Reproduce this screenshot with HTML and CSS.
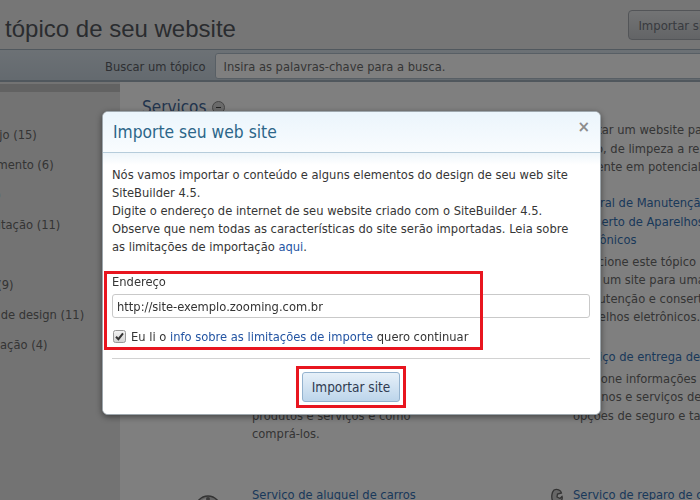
FILE: index.html
```html
<!DOCTYPE html>
<html lang="pt-BR">
<head>
  <meta charset="UTF-8">
  <meta name="viewport" content="width=device-width, initial-scale=1.0">
  <title>Importar site</title>
  <link rel="stylesheet" href="styles.css">
</head>
<body>
  <div class="page">
    <div class="top">
      <h1 class="page-title">Selecione um tópico de seu website</h1>
      <button class="btn-top">Importar site</button>
    </div>

    <div class="search">
      <label class="search-label" for="busca">Buscar um tópico</label>
      <input class="search-input" id="busca" placeholder="Insira as palavras-chave para a busca.">
    </div>

    <div class="layout">
      <div class="sidebar">
        <div class="sidebar-strip"></div>
        <ul class="categories">
          <li>Lojas, comércio e varejo (15)</li>
          <li>Arte, lazer e entretenimento (6)</li>
          <li class="active">Modas e estéticas (12)</li>
          <li>Construção civil e habitação (11)</li>
          <li>Esportes (8)</li>
          <li>Escolas e a educação (9)</li>
          <li>Gráfica, web, serviços de design (11)</li>
          <li>Marketings, a comunicação (4)</li>
        </ul>
      </div>

      <div class="main">
        <h2 class="section-title">Serviços <span class="toggle"></span></h2>

        <div class="topics">
          <div class="topic">
            <div class="topic-icon"></div>
            <div class="topic-body">
              <p class="topic-text">Um site para sua empresa de serviços<br>em qualquer área de atuação</p>
            </div>
          </div>
          <div class="topic">
            <div class="topic-icon"></div>
            <div class="topic-body">
              <p class="topic-text">Montar um website para seu negócio<br>ramo, de limpeza a reparos, e atrair<br>o cliente em potencial.</p>
            </div>
          </div>

          <div class="topic">
            <div class="topic-icon"></div>
            <div class="topic-body">
              <a class="topic-title" href="#">Serviços de limpeza<br>e conservação</a>
              <p class="topic-text">Selecione este tópico para criar<br>um site para empresas de<br>limpeza e conservação de<br>imóveis.</p>
            </div>
          </div>
          <div class="topic">
            <div class="topic-icon"></div>
            <div class="topic-body">
              <a class="topic-title" href="#">Central de Manutenção e<br>Conserto de Aparelhos<br>Eletrônicos</a>
              <p class="topic-text">Selecione este tópico para<br>criar um site para uma<br>manutenção e conserto de<br>aparelhos eletrônicos.</p>
            </div>
          </div>

          <div class="topic">
            <div class="topic-icon"></div>
            <div class="topic-body">
              <a class="topic-title" href="#">Loja de produtos e serviços</a>
              <p class="topic-text">Crie um site para divulgar<br>e apresentar aos clientes<br>produtos e serviços e como<br>comprá-los.</p>
            </div>
          </div>
          <div class="topic">
            <div class="topic-icon"></div>
            <div class="topic-body">
              <a class="topic-title" href="#">Serviço de entrega de encomendas</a>
              <p class="topic-text">Adicione informações sobre<br>e planos e serviços de entrega,<br>opções de seguro e taxas.</p>
            </div>
          </div>

          <div class="topic">
            <div class="topic-icon icon-car">
              <svg width="30" height="30" viewBox="0 0 30 30">
                <path d="M2 22c0-8 6-14 13-14s13 6 13 14z" fill="#c9c9c9" stroke="#666" stroke-width="1.5"/>
                <path d="M7 16c2-3 5-5 8-5" fill="none" stroke="#f2f2f2" stroke-width="2"/>
                <circle cx="15" cy="11" r="2" fill="#777"/>
              </svg>
            </div>
            <div class="topic-body">
              <a class="topic-title" href="#">Serviço de aluguel de carros</a>
            </div>
          </div>
          <div class="topic">
            <div class="topic-icon icon-wrench">
              <svg width="26" height="30" viewBox="0 0 26 30">
                <path d="M17 3c3-1.5 7 0 7.5 3l-4 1-.5 3 3 1.5 2-2c1 3-1.5 6.5-5 6L9 26c-1.5 1.5-4 0-3-2l9.5-10.5c-1.5-3.5-.5-8.5 1.5-10.5z" fill="#cfcfcf" stroke="#666" stroke-width="1.3"/>
              </svg>
            </div>
            <div class="topic-body">
              <a class="topic-title" href="#">Serviço de reparo de computadores</a>
            </div>
          </div>
        </div>
      </div>
    </div>
  </div>

  <div class="overlay"></div>

  <div class="modal">
    <div class="modal-head">
      <h3 class="modal-title">Importe seu web site</h3>
      <button class="modal-close">×</button>
    </div>
    <div class="modal-body">
      <p class="modal-text">Nós vamos importar o conteúdo e alguns elementos do design de seu web site SiteBuilder 4.5.<br>Digite o endereço de internet de seu website criado com o SiteBuilder 4.5.<br>Observe que nem todas as características do site serão importadas. Leia sobre as limitações de importação <a href="#">aqui</a>.</p>

      <div class="field">
        <label class="field-label" for="endereco">Endereço</label>
        <input class="field-input" id="endereco" value="http://site-exemplo.zooming.com.br">
        <label class="agree"><span class="check"><svg width="13" height="13" viewBox="0 0 13 13">
              <defs>
                <linearGradient id="box" x1="0" y1="0" x2="0" y2="1">
                  <stop offset="0" stop-color="#f4f4f4"/>
                  <stop offset="1" stop-color="#d2d2d2"/>
                </linearGradient>
              </defs>
              <rect x=".5" y=".5" width="12" height="12" rx="2" fill="url(#box)" stroke="#999"/>
              <path d="M3 6.8l2.4 2.4L10 3.4" fill="none" stroke="#333" stroke-width="2"/>
            </svg></span>Eu li o <a href="#">info sobre as limitações de importe</a> quero continuar</label>
        <span class="mark mark-field"></span>
      </div>

      <div class="modal-foot">
        <span class="mark-button"><button class="btn-import">Importar site</button></span>
      </div>
    </div>
  </div>
</body>
</html>
```

FILE: styles.css
```css
body {
    margin: 0;
    overflow: hidden;
    font-family: "DejaVu Sans Condensed", "DejaVu Sans", sans-serif;
    font-stretch: condensed;
    font-size: 12.8px;
    color: #6a6a6a;
    background: #fff;
}

a {
    color: #3572b5;
    text-decoration: none;
}

/* page behind the dialog, scrolled a bit to the right */
.page {
    width: 920px;
    margin-left: -150px;
}

.top {
    display: flex;
    justify-content: space-between;
    align-items: flex-start;
    height: 49px;
    padding: 0 46px 0 3px;
    background: #ededed;
}

.page-title {
    margin: 15px 0 0;
    font: normal 24px/28px "Liberation Sans", sans-serif;
    color: #55595f;
}

.btn-top {
    margin-top: 10px;
    height: 30px;
    padding: 0 9px;
    border: 1px solid #a6aab0;
    border-radius: 4px;
    background: linear-gradient(#e6e8ea, #c6c9cd);
    color: #70757e;
    font: inherit;
    font-size: 13px;
}

.search {
    display: flex;
    align-items: center;
    gap: 9px;
    padding: 3px 0 1px 255px;
    border-top: 1px solid #a2b0bc;
    border-bottom: 2px solid #a0aebb;
    background: linear-gradient(#d9e3eb, #c8d4de);
}

.search-label {
    color: #5c5f66;
}

.search-input {
    flex: 1;
    height: 26px;
    box-sizing: border-box;
    padding: 0 8px;
    border: 1px solid #b1bfcb;
    border-radius: 3px;
    font: inherit;
}

.search-input::placeholder {
    color: #6c6c6c;
}

.layout {
    display: flex;
    min-height: 420px;
}

.sidebar {
    width: 270px;
    flex-shrink: 0;
    background: #e6e6e6;
}

.sidebar-strip {
    height: 8px;
    margin-top: 2px;
    background-color: #eaeaea;
    background-image: radial-gradient(circle, #c4c4c4 0.7px, transparent 0.9px);
    background-size: 2px 2px;
}

.categories {
    list-style: none;
    margin: 28px 0 0;
    padding: 0 0 0 20px;
    line-height: 30px;
    white-space: nowrap;
}

.categories .active {
    color: #2f8f96;
}

.main {
    flex: 1;
    padding: 13px 0 0 22px;
}

.section-title {
    display: flex;
    align-items: center;
    gap: 6px;
    margin: 0;
    font-size: 17px;
    font-weight: normal;
    line-height: 24px;
    color: #45699a;
}

.toggle {
    position: relative;
    width: 11px;
    height: 11px;
    border: 1px solid #8a8a8a;
    border-radius: 50%;
    background: #d4d4d4;
}

.toggle::after {
    content: "";
    position: absolute;
    left: 3px;
    top: 5px;
    width: 5px;
    height: 1px;
    background: #444;
}

.topics {
    display: grid;
    grid-template-columns: 321px 400px;
    grid-template-rows: 73px 154px 138px auto;
    margin: 2px 0 0 48px;
    line-height: 18.5px;
    white-space: nowrap;
}

.topic {
    display: flex;
}

.topic-icon {
    width: 62px;
    flex-shrink: 0;
}

.icon-car {
    padding-top: 2px;
    box-sizing: border-box;
    padding-left: 3px;
}

.icon-wrench {
    padding-top: 1px;
    box-sizing: border-box;
    padding-left: 26px;
}

.topic-title {
    display: block;
    margin-bottom: 3px;
}

.topic-text {
    margin: 0;
}

/* dialog */
.overlay {
    position: fixed;
    inset: 0;
    background: rgba(0, 0, 0, 0.5);
}

.modal {
    position: fixed;
    left: 102px;
    top: 111px;
    width: 499px;
    box-sizing: border-box;
    border: 1px solid #9ea7ad;
    border-radius: 6px;
    background: #fff;
    box-shadow: 0 2px 6px rgba(0, 0, 0, 0.45);
    color: #363636;
    overflow: hidden;
}

.modal-head {
    display: flex;
    justify-content: space-between;
    align-items: center;
    height: 40px;
    padding: 0 10px;
    border-bottom: 1px solid #b6ccdb;
    background: linear-gradient(#ebf5fc, #f9fcfe);
}

.modal-title {
    margin: 0;
    font-size: 17.3px;
    font-weight: normal;
    color: #2c6689;
}

.modal-close {
    margin-top: -10px;
    padding: 0;
    border: 0;
    background: none;
    font: bold 15px "DejaVu Sans", sans-serif;
    color: #8c8c8c;
}

.modal-body {
    padding: 13px 10px 0 9px;
    background: linear-gradient(#eef5fa, #fff 12px);
}

.modal-text {
    margin: 0 0 17px;
    padding-right: 10px;
    line-height: 18px;
}

.modal-text a,
.agree a {
    color: #2455a3;
}

.field {
    position: relative;
}

.field-label {
    display: block;
    line-height: 18px;
}

.field-input {
    display: block;
    width: 100%;
    height: 24px;
    box-sizing: border-box;
    margin-top: 3px;
    padding: 0 4px;
    border: 1px solid #c9c9c9;
    border-radius: 3px;
    font: inherit;
    color: #333;
}

.agree {
    display: block;
    margin-top: 10px;
    line-height: 18px;
}

.check {
    display: inline-block;
    margin: 0 5px 0 1px;
    vertical-align: -2px;
}

.check svg {
    display: block;
}

/* red annotation boxes */
.mark {
    position: absolute;
    border: 3px solid #e8151f;
}

.mark-field {
    left: -8px;
    top: -2px;
    width: 379px;
    height: 79px;
    box-sizing: border-box;
}

.modal-foot {
    margin-top: 12px;
    padding: 7px 0 6px;
    border-top: 1px solid #d2d2d2;
    text-align: center;
}

.mark-button {
    display: inline-block;
    padding: 3px;
    border: 3px solid #e8151f;
    line-height: 0;
}

.btn-import {
    height: 30px;
    padding: 0 9px;
    border: 1px solid #93b2ce;
    border-radius: 3px;
    background: linear-gradient(#e6f0f9, #bcd5eb);
    color: #2f3b50;
    font: inherit;
    font-size: 13.5px;
}
```
